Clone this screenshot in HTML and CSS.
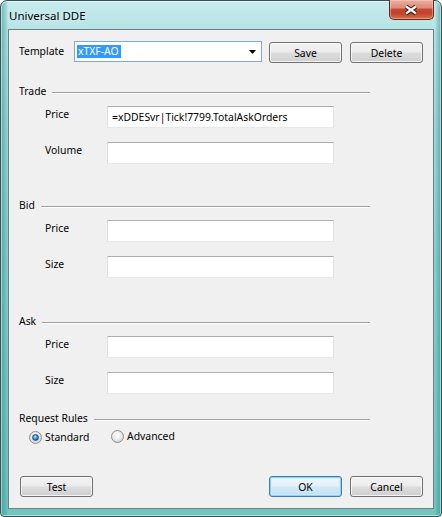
FILE: index.html
```html
<!DOCTYPE html>
<html>
<head>
<meta charset="utf-8">
<link rel="stylesheet" href="styles.css">
</head>
<body>
<div class="window">
  <div class="titlebar">
    <span class="title">Universal DDE</span>
    <div class="close">
      <svg width="45" height="19" viewBox="0 0 45 19">
        <path d="M17.5 6.5 L27.5 13.5 M27.5 6.5 L17.5 13.5" stroke="#3b1a12" stroke-width="4.4" fill="none"/>
        <path d="M17.5 6.5 L27.5 13.5 M27.5 6.5 L17.5 13.5" stroke="#ffffff" stroke-width="2.4" fill="none"/>
      </svg>
    </div>
  </div>
  <div class="client">
    <div class="template-row">
      <span class="tlabel">Template</span>
      <div class="combo">
        <span class="sel">xTXF-AO</span>
        <svg class="arrow" width="7" height="4" viewBox="0 0 7 4"><path d="M0 0H7L3.5 4Z" fill="#000"/></svg>
      </div>
      <button class="btn save">Save</button>
      <button class="btn del">Delete</button>
    </div>

    <section class="group trade">
      <div class="ghead"><span class="gtitle">Trade</span><i class="gline"></i></div>
      <div class="field"><span class="flabel">Price</span><div class="input">=xDDESvr|Tick!7799.TotalAskOrders</div></div>
      <div class="field"><span class="flabel">Volume</span><div class="input"></div></div>
    </section>

    <section class="group bid">
      <div class="ghead"><span class="gtitle">Bid</span><i class="gline"></i></div>
      <div class="field"><span class="flabel">Price</span><div class="input"></div></div>
      <div class="field"><span class="flabel">Size</span><div class="input"></div></div>
    </section>

    <section class="group ask">
      <div class="ghead"><span class="gtitle">Ask</span><i class="gline"></i></div>
      <div class="field"><span class="flabel">Price</span><div class="input"></div></div>
      <div class="field"><span class="flabel">Size</span><div class="input"></div></div>
    </section>

    <section class="group rules">
      <div class="ghead"><span class="gtitle">Request Rules</span><i class="gline"></i></div>
      <div class="radios">
        <label class="radio std"><span class="rb on"><span class="dot"></span></span><span class="rtext">Standard</span></label>
        <label class="radio adv"><span class="rb"></span><span class="rtext">Advanced</span></label>
      </div>
    </section>

    <div class="footer">
      <button class="btn test">Test</button>
      <button class="btn ok">OK</button>
      <button class="btn cancel">Cancel</button>
    </div>
  </div>
</div>
</body>
</html>
```

FILE: styles.css
```css
html, body {
  margin: 0;
  padding: 0;
}
body {
  width: 442px;
  height: 517px;
  overflow: hidden;
  background: #ffffff;
  font-family: "Noto Sans", "Open Sans", sans-serif;
  color: #000;
}
.window {
  width: 442px;
  height: 517px;
  box-sizing: border-box;
  border: 1px solid #33525a;
  border-radius: 7px 7px 4px 4px;
  background:
    linear-gradient(90deg, rgba(30,130,128,0.5) 0, rgba(40,150,146,0.15) 6px, rgba(40,140,140,0) 7px, rgba(40,140,140,0) 434px, rgba(40,150,146,0.15) 435px, rgba(30,130,128,0.5) 100%),
    linear-gradient(180deg, #c6ebed 0, #b8e4e6 26px, #9fd9d8 120px, #86cfca 300px, #72c4be 100%);
  box-shadow: inset 0 0 0 1px rgba(255,255,255,0.5);
  display: flex;
  flex-direction: column;
  padding: 0 7px 7px 7px;
}
.titlebar {
  height: 28px;
  display: flex;
  align-items: flex-start;
  flex: none;
}
.title {
  font-size: 11.5px;
  line-height: 14px;
  padding-top: 8px;
  margin-left: 1px;
  color: #000;
  text-shadow: 0 0 6px rgba(255,255,255,0.9);
}
.close {
  margin-left: auto;
  margin-right: 0;
  margin-top: -1px;
  width: 45px;
  height: 20px;
  box-sizing: border-box;
  border: 1px solid #6b2418;
  border-top: none;
  border-radius: 0 0 5px 5px;
  background: linear-gradient(180deg, #eab0a3 0, #dc8b78 40%, #c44a31 50%, #c0422a 70%, #d8704e 100%);
  box-shadow: inset 0 0 0 1px rgba(255,210,190,0.45);
  display: flex;
  overflow: hidden;
}
.close svg {
  display: block;
  margin-left: -1px;
}
.client {
  flex: 1;
  box-sizing: border-box;
  background: #f0f0f0;
  border: 1px solid #6d7f88;
  display: flex;
  flex-direction: column;
  font-size: 10.4px;
}
.template-row {
  display: flex;
  align-items: flex-start;
  margin-top: 11px;
  padding-left: 10px;
}
.tlabel {
  width: 55px;
  line-height: 21px;
}
.combo {
  width: 188px;
  height: 21px;
  box-sizing: border-box;
  background: #fff;
  border: 1px solid #7ea9d6;
  display: flex;
  align-items: center;
  justify-content: space-between;
  padding: 0 5px 0 2px;
}
.sel {
  background: #3399ff;
  color: #fff;
  line-height: 13px;
  padding: 0 2px 0 1px;
}
.arrow {
  display: block;
  margin-top: 1px;
}
.btn {
  width: 73px;
  height: 21px;
  box-sizing: border-box;
  border: 1px solid #707070;
  border-radius: 3px;
  background: linear-gradient(180deg, #f3f3f3 0, #ebebeb 48%, #dddddd 52%, #cfcfcf 100%);
  box-shadow: inset 0 0 0 1px rgba(255,255,255,0.75);
  font-family: "Noto Sans", "Open Sans", sans-serif;
  font-size: 10.4px;
  color: #000;
  padding: 0;
  line-height: 18px;
  text-align: center;
}
.save {
  margin-left: 7px;
  margin-top: 1px;
}
.del {
  margin-left: 8px;
  margin-top: 1px;
}
.group {
  margin-left: 10px;
  width: 351px;
}
.trade { margin-top: 20px; }
.bid { margin-top: 33px; }
.ask { margin-top: 35px; }
.rules { margin-top: 16px; }
.ghead {
  display: flex;
  align-items: flex-start;
  height: 16px;
}
.gtitle {
  line-height: 16px;
}
.gline {
  flex: 1;
  height: 1px;
  margin-top: 9px;
  margin-left: 6px;
  background: #a0a0a0;
  box-shadow: 0 1px 0 #ffffff;
}
.field {
  display: flex;
  align-items: flex-start;
  padding-left: 26px;
  margin-top: 14px;
}
.ghead + .field {
  margin-top: 7px;
}
.flabel {
  width: 62px;
  line-height: 15px;
  padding-top: 1px;
}
.input {
  width: 227px;
  height: 22px;
  box-sizing: border-box;
  background: #fff;
  border: 1px solid;
  border-color: #abadb3 #e2e3ea #e3e9ef #dbdfe6;
  padding: 0 4px;
  line-height: 20px;
  white-space: nowrap;
  overflow: hidden;
}
.radios {
  display: flex;
  align-items: flex-start;
  margin-top: 3px;
  padding-left: 10px;
  height: 16px;
}
.radio {
  display: flex;
  align-items: center;
  height: 16px;
}
.std {
  width: 82px;
}
.adv {
  margin-top: -1px;
}
.rb {
  width: 13px;
  height: 13px;
  box-sizing: border-box;
  border-radius: 50%;
  border: 1px solid #8d8d8d;
  background: radial-gradient(circle at 45% 40%, #ffffff 0, #eeeeee 40%, #d4d4d4 75%, #c4c4c4 100%);
  display: flex;
  align-items: center;
  justify-content: center;
  flex: none;
}
.dot {
  width: 7px;
  height: 7px;
  border-radius: 50%;
  box-sizing: border-box;
  border: 1px solid #1b4f86;
  background: radial-gradient(circle at 40% 35%, #b8ecff 0, #4aa8e8 35%, #1a6fbf 70%, #0d4d8e 100%);
}
.rtext {
  margin-left: 3px;
  line-height: 16px;
}
.footer {
  margin-top: auto;
  margin-bottom: 11px;
  display: flex;
  padding: 0 10px 0 11px;
}
.ok {
  margin-left: auto;
  border-color: #3c7fb1;
  box-shadow: inset 0 0 0 1px #8fd3f3, inset 0 0 0 2px rgba(200,236,250,0.6);
  background: linear-gradient(180deg, #eef7fc 0, #e3f1fa 48%, #d2e8f6 52%, #c5e0f1 100%);
}
.cancel {
  margin-left: 8px;
}
```
